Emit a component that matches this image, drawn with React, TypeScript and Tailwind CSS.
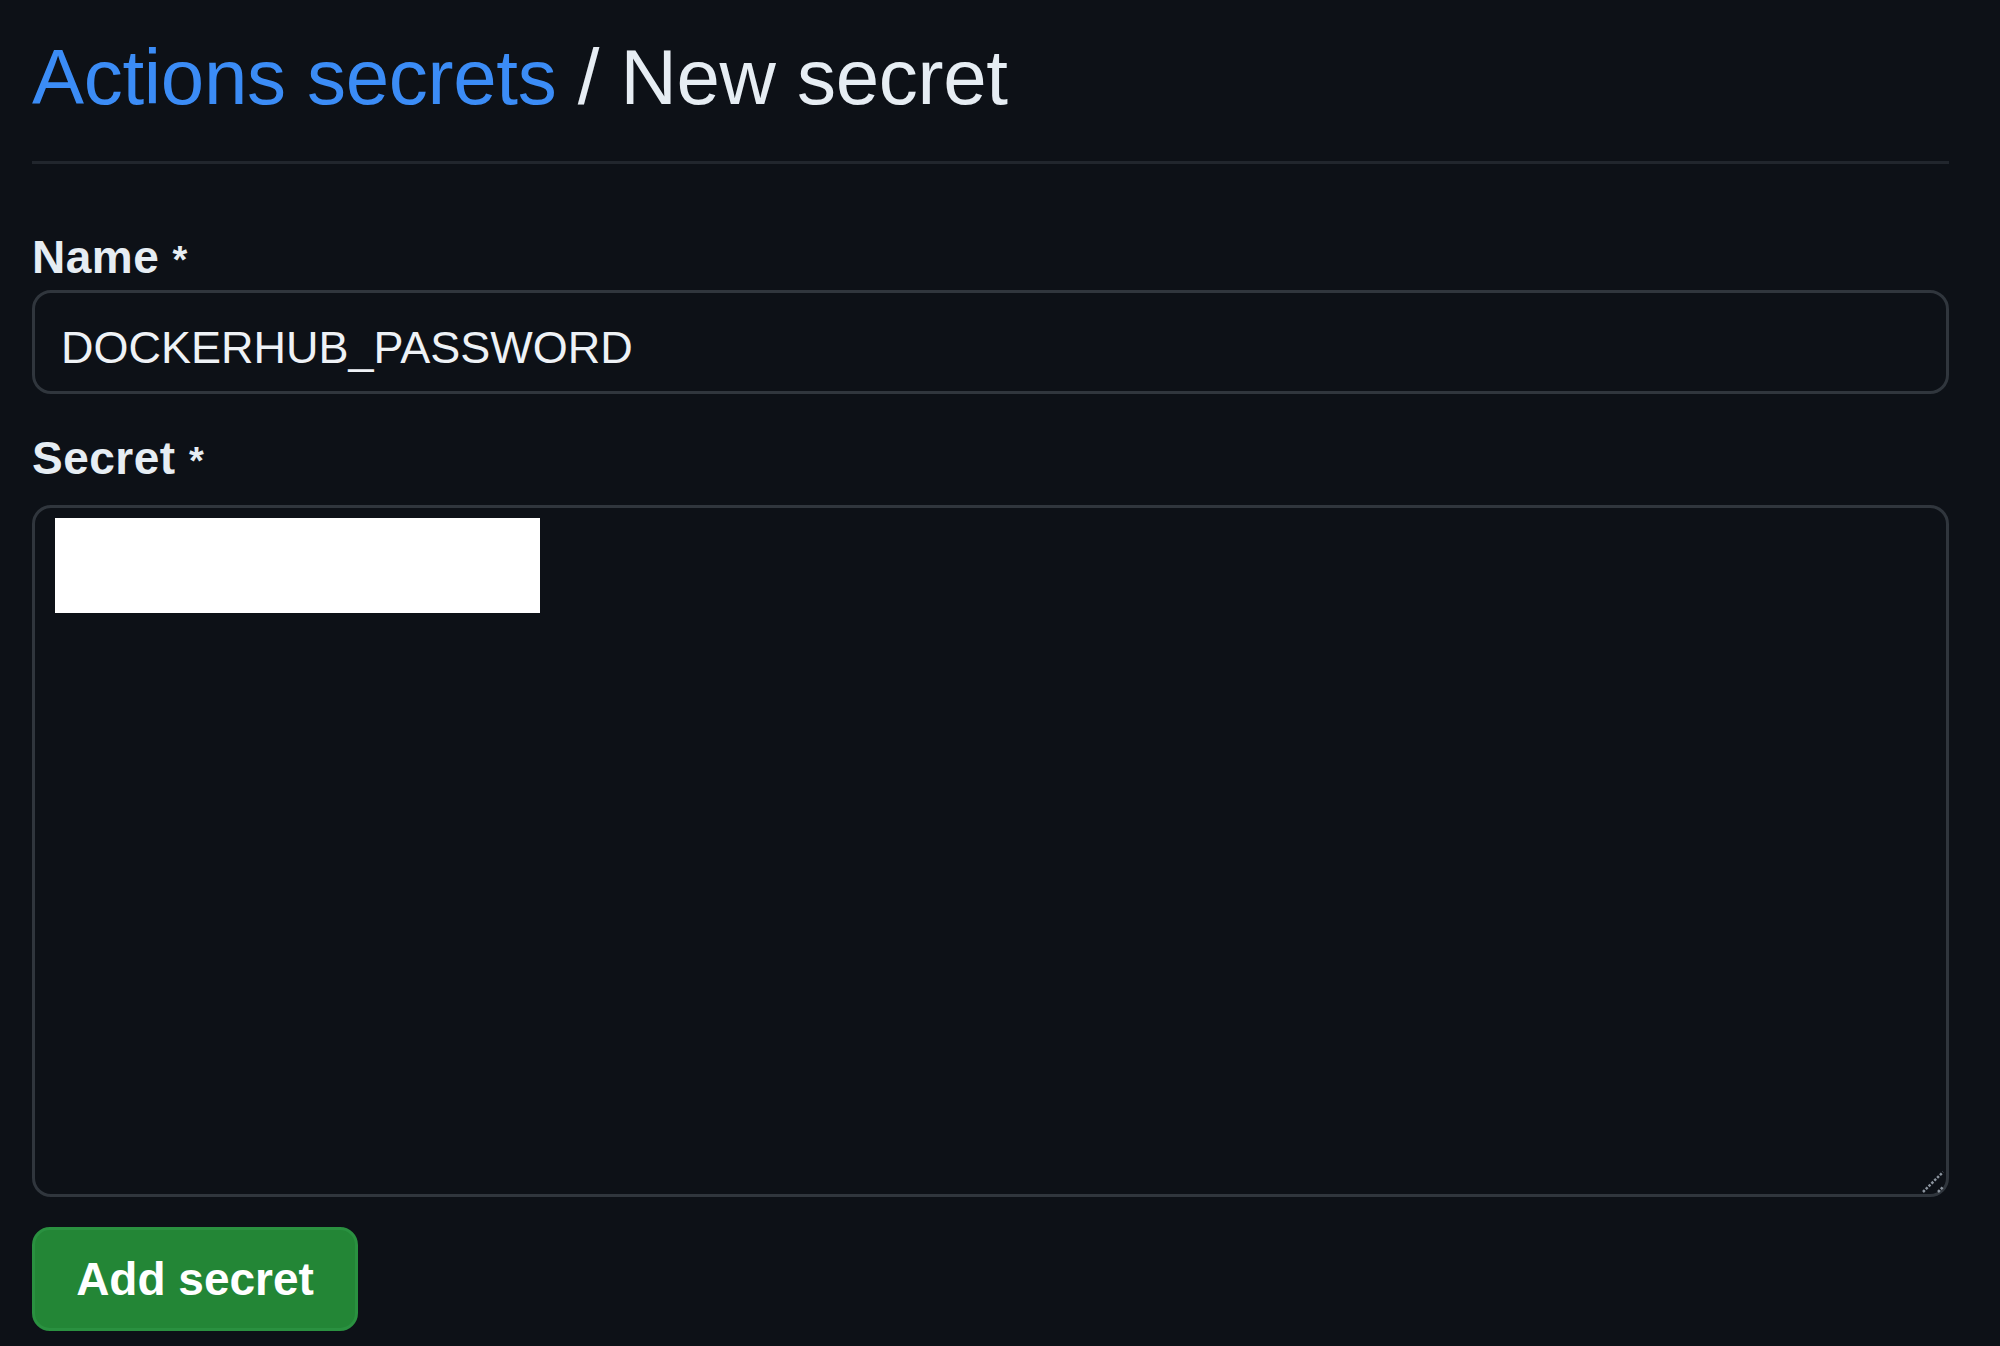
import React from "react";

// GitHub dark, zoomed: "Actions secrets / New secret" form
export default function App() {
  return (
    <main className="min-h-screen w-full bg-[#0d1117] pl-[32px] pr-[51px] font-['Liberation_Sans',Arial,sans-serif]">
      {/* header */}
      <div className="pt-[38px] pb-[45px] border-b-[3px] border-[#21262d]">
        <h1 className="text-[78px] leading-[78px] font-normal tracking-[-0.3px] text-[#e6edf3] whitespace-nowrap">
          <a href="#" className="text-[#3b8cf6]">
            Actions secrets
          </a>{" "}
          / New secret
        </h1>
      </div>

      <form onSubmit={(e) => e.preventDefault()} className="flex flex-col">
        {/* name */}
        <label className="mt-[70px] h-[46px] text-[46px] leading-[46px] font-bold tracking-[0.5px] text-[#e6edf3]">
          Name <span className="text-[38px] leading-none">*</span>
        </label>
        <div className="mt-[10px] h-[104px] rounded-[19px] border-[3px] border-[#30363d] pl-[26px] pt-[32px]">
          <span className="block text-[45px] leading-[45px] text-[#eef2f6]">
            DOCKERHUB_PASSWORD
          </span>
        </div>

        {/* secret */}
        <label className="mt-[41px] h-[46px] text-[46px] leading-[46px] font-bold tracking-[0.5px] text-[#e6edf3]">
          Secret <span className="text-[38px] leading-none">*</span>
        </label>
        <div className="relative mt-[24px] h-[692px] rounded-[19px] border-[3px] border-[#30363d] pl-[20px] pt-[10px]">
          <div className="h-[95px] w-[485px] bg-white" />
          <svg
            className="absolute bottom-0 right-0"
            width="24"
            height="24"
            viewBox="0 0 24 24"
          >
            <path
              d="M1 22 L21 2 M16 22 L21 17"
              stroke="#8b949e"
              strokeWidth="2.5"
              strokeDasharray="2.5 1.5"
              fill="none"
            />
          </svg>
        </div>

        {/* submit */}
        <div className="mt-[30px]">
          <button
            type="submit"
            className="flex h-[104px] w-[326px] items-center justify-center rounded-[18px] border-[3px] border-[#2a9140] bg-[#238636] text-[46px] font-bold text-white"
          >
            Add secret
          </button>
        </div>
      </form>
    </main>
  );
}
